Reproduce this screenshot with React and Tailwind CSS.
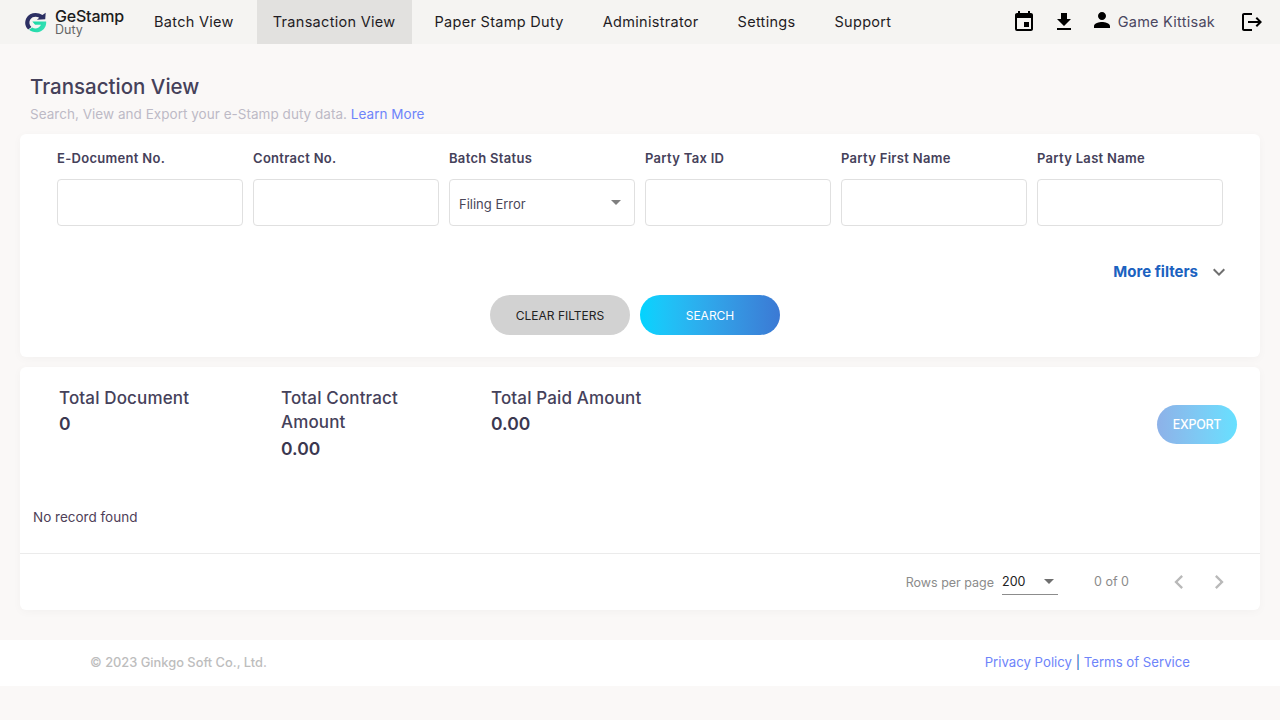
import React from "react";
import { MdEvent, MdFileDownload, MdPerson, MdLogout, MdExpandMore, MdChevronLeft, MdChevronRight, MdArrowDropDown } from "react-icons/md";

const nav = ["Batch View", "Transaction View", "Paper Stamp Duty", "Administrator", "Settings", "Support"];
const filters = ["E-Document No.", "Contract No.", "Batch Status", "Party Tax ID", "Party First Name", "Party Last Name"];

function Logo() {
  return (
    <svg width="24" height="24" viewBox="0 0 26 26" className="shrink-0">
      <defs>
        <linearGradient id="lg" x1="0" y1="0" x2="1" y2="0.4">
          <stop offset="0" stopColor="#14d6a0" />
          <stop offset="1" stopColor="#35e0b5" />
        </linearGradient>
      </defs>
      <path d="M20 5.5 C14 1.5 5.5 3 2.5 9 C0.5 13 1 18 4.5 21 L8 18.5 C5.5 16 5.2 12.5 7 10 C9 7 13.5 6.5 16.5 8.5 L14 10.5 L23 10 L23.5 3 Z" fill="#2c2f63" />
      <path d="M9 12.5 L24 12.5 C24.5 17 22 22 17 23.5 C12.5 25 8 23.5 5.5 21.5 L9 19 C12 21 16.5 20 18.5 16 L12 16 Z" fill="url(#lg)" />
    </svg>
  );
}

function Field({ label, children }) {
  return (
    <div className="w-[186px] shrink-0">
      <div className="h-[45px] pt-[15px] text-[13px] leading-[18px] font-semibold tracking-[0.3px] text-[#45415a]">{label}</div>
      <div className="relative h-[47px] rounded-[4px] border border-[#e0e0e0] bg-white">{children}</div>
    </div>
  );
}

export default function App() {
  return (
    <div className="min-h-[720px] bg-[#faf8f7] text-[#45415a]" style={{ fontFamily: "Inter, 'Liberation Sans', sans-serif" }}>
      <header className="flex h-11 items-center bg-[#f5f4f2]">
        <div className="flex w-[138px] shrink-0 items-center pl-[24px]">
          <Logo />
          <div className="ml-[7px] flex flex-col">
            <span className="text-[16px] leading-[15px] font-medium tracking-[-0.2px] text-[#1c1c1c]">GeStamp</span>
            <span className="text-[12.5px] leading-[12px] text-[#666]">Duty</span>
          </div>
        </div>
        <nav className="flex h-full gap-[7px]">
          {nav.map((n) => (
            <div key={n} className={`flex h-full items-center px-4 text-[14.5px] tracking-[0.3px] text-[#1f1c24] ${n === "Transaction View" ? "bg-[#e2e1df]" : ""}`}>{n}</div>
          ))}
        </nav>
        <div className="ml-auto flex h-full items-center pr-[16px]">
          <MdEvent size={24} className="text-black" />
          <MdFileDownload size={24} className="ml-[16px] text-black" />
          <MdPerson size={24} className="mb-[4px] ml-[14px] text-black" />
          <span className="ml-[4px] text-[14.5px] tracking-[0.25px] text-[#4b4760]">Game Kittisak</span>
          <MdLogout size={24} className="ml-[25px] text-black" />
        </div>
      </header>

      <main className="px-5">
        <div className="px-[10px] pt-[29px]">
          <h1 className="text-[20.5px] leading-[28px] font-medium text-[#45415a]">Transaction View</h1>
          <p className="mt-[3px] text-[13.5px] leading-[20px] tracking-[0.03px] text-[#bdbac6]">Search, View and Export your e-Stamp duty data. <span className="text-[#6e84fa]">Learn More</span></p>
        </div>

        <section className="mt-[10px] h-[223px] rounded-[6px] bg-white shadow-[0_2px_10px_rgba(0,0,0,0.03)]">
          <div className="flex gap-[10px] pl-[37px]">
            {filters.map((f) => (
              <Field key={f} label={f}>
                {f === "Batch Status" && (
                  <>
                    <span className="absolute left-[9px] top-[15px] text-[13px] leading-[18px] text-[#4a4658]">Filing Error</span>
                    <MdArrowDropDown size={24} className="absolute right-[6px] top-[10px] text-[#7f7f7f]" />
                  </>
                )}
              </Field>
            ))}
          </div>
          <div className="mt-[35px] flex h-[22px] items-center justify-end pr-[29px]">
            <span className="text-[15px] font-bold text-[#1b62c0]">More filters</span>
            <MdExpandMore size={24} className="ml-[9px] text-[#6f6f6f]" />
          </div>
          <div className="mt-[12px] flex justify-center gap-[10px] pr-[10px]">
            <button className="h-10 w-[140px] rounded-full bg-[#d2d2d2] pt-[1px] text-[12px] font-normal text-[#222]">CLEAR FILTERS</button>
            <button className="h-10 w-[140px] rounded-full bg-gradient-to-r from-[#00d4ff] to-[#3b79d4] pt-[1px] text-[12px] font-normal text-white">SEARCH</button>
          </div>
        </section>

        <section className="mt-[10px] h-[243px] rounded-[6px] bg-white shadow-[0_2px_10px_rgba(0,0,0,0.03)]">
          <div className="flex h-[187px] flex-col border-b border-[#ebebeb]">
            <div className="flex h-[140px] items-start pl-[39px] pr-[23px] pt-[19px]">
              <div className="w-[222px] shrink-0">
                <div className="text-[17px] leading-6 font-medium tracking-[0.15px] text-[#45415a]">Total Document</div>
                <div className="mt-[2px] text-[17.5px] leading-6 font-semibold text-[#3b3850]">0</div>
              </div>
              <div className="w-[210px] shrink-0">
                <div className="w-[150px] text-[17px] leading-6 font-medium tracking-[0.15px] text-[#45415a]">Total Contract Amount</div>
                <div className="mt-[3px] text-[17.5px] leading-6 font-semibold text-[#3b3850]">0.00</div>
              </div>
              <div>
                <div className="text-[17px] leading-6 font-medium tracking-[0.15px] text-[#45415a]">Total Paid Amount</div>
                <div className="mt-[2px] text-[17.5px] leading-6 font-semibold text-[#3b3850]">0.00</div>
              </div>
              <button className="ml-auto mt-[19px] h-[39px] w-20 rounded-full bg-gradient-to-r from-[#8db1e8] to-[#66e0ff] pt-[1px] text-[12.5px] font-medium tracking-[-0.3px] text-white">EXPORT</button>
            </div>
            <div className="pl-[13px] text-[13.5px] leading-5 text-[#4f3f58]">No record found</div>
          </div>
          <div className="flex h-[56px] items-center pr-[27px] pt-[2px]">
            <span className="ml-auto pt-[1px] text-[12.5px] text-[#8b8b8b]">Rows per page</span>
            <div className="relative ml-[8px] h-[24px] w-[56px] border-b border-[#8c8c8c] text-[12.5px] leading-[22px] text-[#222]">
              200
              <MdArrowDropDown size={24} className="absolute right-[-3px] top-[-2px] text-[#6f6f6f]" />
            </div>
            <span className="ml-[36px] mb-[2px] text-[12.5px] text-[#8b8b8b]">0 of 0</span>
            <MdChevronLeft size={28} className="mb-[2px] ml-[36px] text-[#b9b9b9]" />
            <MdChevronRight size={28} className="mb-[2px] ml-[12px] text-[#b9b9b9]" />
          </div>
        </section>
      </main>

      <footer className="mt-[30px] flex h-[46px] items-center justify-between bg-white px-[90px] pb-[1px] text-[13.2px]">
        <span className="text-[12.85px] font-medium text-[#bdbdbd]">© 2023 Ginkgo Soft Co., Ltd.</span>
        <span className="text-[#1b62c0]"><span className="text-[#6e84fa]">Privacy Policy</span> | <span className="text-[#6e84fa]">Terms of Service</span></span>
      </footer>
    </div>
  );
}
